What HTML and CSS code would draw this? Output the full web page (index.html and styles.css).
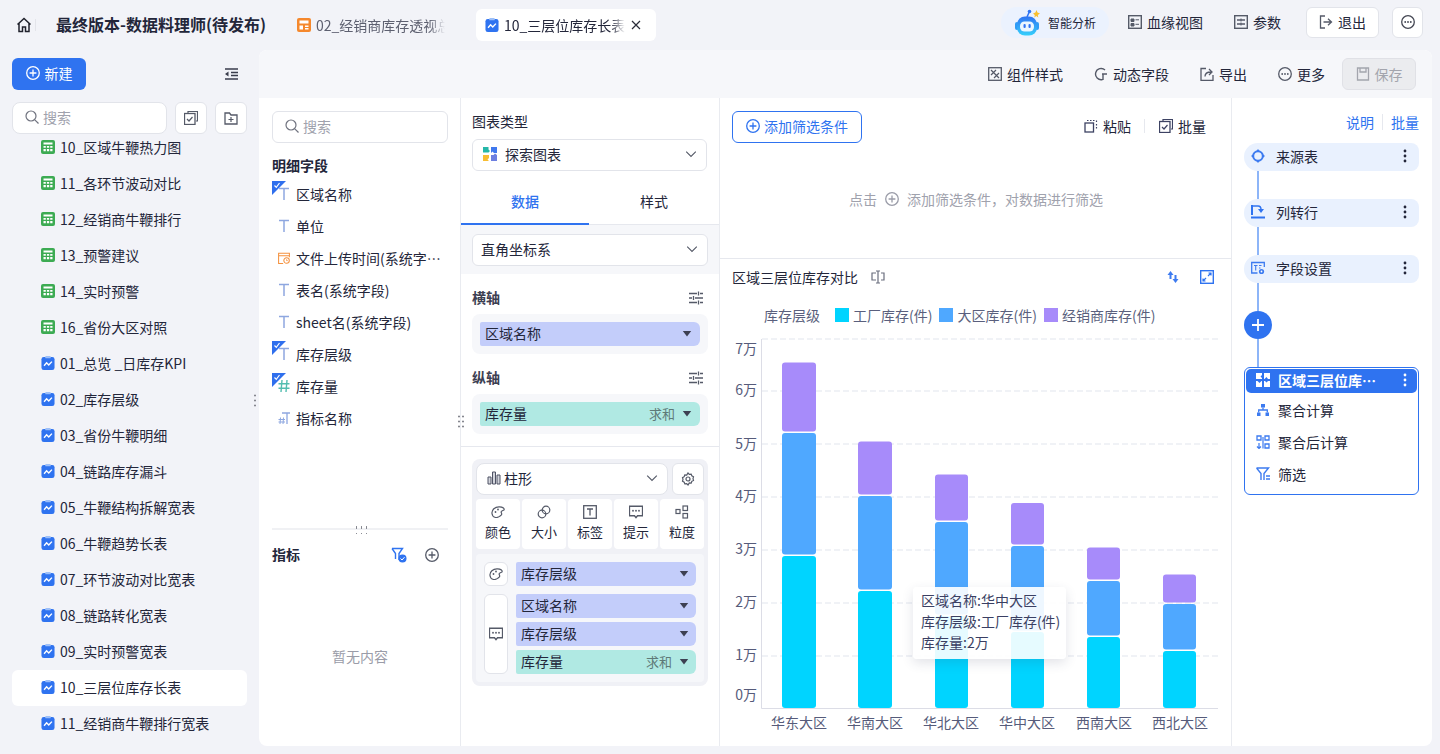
FILE: index.html
```html
<!DOCTYPE html>
<html lang="zh-CN">
<head>
    <meta charset="UTF-8">
    <meta name="viewport" content="width=device-width, initial-scale=1.0">
    <title>最终版本-数据料理师(待发布)</title>
    <link rel="stylesheet" href="styles.css">
</head>
<body>
    <!-- shared icons -->
    <svg class="sprite" aria-hidden="true">
        <symbol id="i-search" viewBox="1 1 14 14"><circle cx="7" cy="7" r="5" fill="none" stroke="currentColor" stroke-width="1.2"/><path d="M10.8 10.8 14.5 14.5" stroke="currentColor" stroke-width="1.2" fill="none"/></symbol>
        <symbol id="i-plus" viewBox="1 1 14 14"><circle cx="8" cy="8" r="6.3" fill="none" stroke="currentColor" stroke-width="1.3"/><path d="M8 4.6v6.8M4.6 8h6.8" stroke="currentColor" stroke-width="1.3" fill="none"/></symbol>
        <symbol id="i-dots" viewBox="1 1 14 14"><circle cx="8" cy="8" r="6.3" fill="none" stroke="currentColor" stroke-width="1.3"/><circle cx="5.2" cy="8" r=".9" fill="currentColor"/><circle cx="8" cy="8" r=".9" fill="currentColor"/><circle cx="10.8" cy="8" r=".9" fill="currentColor"/></symbol>
        <symbol id="i-chev" viewBox="0 0 16 16"><path d="M2.5 5.2 8 10.8l5.5-5.6" fill="none" stroke="currentColor" stroke-width="1.3"/></symbol>
        <symbol id="i-tune" viewBox="1 1 14 14"><path d="M1 3.5h8M12 3.5h3M1 8h3M7 8h8M1 12.5h8M12 12.5h3M10.5 1.5v4M5.5 6v4M10.5 10.5v4" fill="none" stroke="currentColor" stroke-width="1.3"/></symbol>
        <symbol id="i-sheet" viewBox="0 0 14 14"><rect width="14" height="14" rx="2" fill="#3dab53"/><path d="M2.5 2.5h9v2h-9zM2.5 6h2.3v1.8H2.5zM5.9 6h2.3v1.8H5.9zM9.2 6h2.3v1.8H9.2zM2.5 9h2.3v2.2H2.5zM5.9 9h2.3v2.2H5.9zM9.2 9h2.3v2.2H9.2z" fill="#fff"/></symbol>
        <symbol id="i-board" viewBox="0 0 14 15"><rect y="1" width="14" height="14" rx="2.5" fill="#2f73f0"/><rect x="4" width="6" height="2.5" rx="1" fill="#9dbff8"/><path d="M2.8 10.5 5.5 7.3 7.8 9.7 11.2 6" fill="none" stroke="#fff" stroke-width="1.5"/></symbol>
        <symbol id="i-t" viewBox="0 0 12 14"><path d="M1 1.500h10M6 1.500V13" fill="none" stroke="currentColor" stroke-width="1.5"/></symbol>
        <symbol id="i-corner" viewBox="0 0 14 14"><path d="M0 0h14L0 14z" fill="#2f6fed"/><path d="M2.5 4.5 4.3 6.3 7.5 2" fill="none" stroke="#fff" stroke-width="1.2"/></symbol>
        <symbol id="i-caret" viewBox="0 0 10 6"><path d="M.8 0h8.4L5 5.6z" fill="currentColor"/></symbol>
        <symbol id="i-kebab" viewBox="0 0 4 14"><circle cx="2" cy="2" r="1.4" fill="currentColor"/><circle cx="2" cy="7" r="1.4" fill="currentColor"/><circle cx="2" cy="12" r="1.4" fill="currentColor"/></symbol>
        <symbol id="i-palette" viewBox="1 2 14 12"><path d="M2 9.5C1.500 6 5 2.500 9.500 2.800c2.500.2 4.700 1.400 4.700 2.600 0 1.100-2.600 1-3 2.200-.4 1.300 1.200 1.900.2 3.300C10 12.700 7 14 4.800 13.300 3.200 12.800 2.200 11.200 2 9.500z" fill="none" stroke="currentColor" stroke-width="1.2"/><circle cx="5.5" cy="8" r=".9" fill="currentColor"/><circle cx="8" cy="5.5" r=".9" fill="currentColor"/></symbol>
        <symbol id="i-chat" viewBox="1 2 14 12.5"><path d="M1.5 2.5h13v9.500H9.500L8 14l-1.500-2H1.500z" fill="none" stroke="currentColor" stroke-width="1.3"/><circle cx="5" cy="7" r=".9" fill="currentColor"/><circle cx="8" cy="7" r=".9" fill="currentColor"/><circle cx="11" cy="7" r=".9" fill="currentColor"/></symbol>
        <symbol id="i-batch" viewBox="1 1 14 14"><path d="M5 3V1.500h9.500V11H13" fill="none" stroke="currentColor" stroke-width="1.2"/><rect x="1.5" y="3.5" width="10.5" height="11" fill="none" stroke="currentColor" stroke-width="1.3"/><path d="M4 9l2 2 3.500-4" fill="none" stroke="currentColor" stroke-width="1.2"/></symbol>
        <symbol id="i-puzzle" viewBox="0 0 14 14"><path d="M0 0h6v2L4.500 3.500 6 5v1H0zM8 0h6v6H12L10.500 4 8.500 6H8zM0 8h1.500L3.500 10l2-2H6v6H0zM8 8h1l1.500 1.500L12 8h2v6H8z" fill="currentColor"/></symbol>
    </svg>

    <header class="topbar">
        <div class="crumb">
            <svg class="home-icon" viewBox="0 0 16 16"><path d="M1.500 7.500 8 1.500l6.500 6M3 6.500V14.500h3.500V10h3v4.500H13V6.500" fill="none" stroke="#20222c" stroke-width="1.5"/></svg>
            <span class="crumb-sep"></span>
            <span class="crumb-title">最终版本-数据料理师(待发布)</span>
        </div>
        <div class="tab">
            <svg class="ic" viewBox="0 0 14 14"><rect width="14" height="14" rx="2" fill="#f5882d"/><path d="M2.500 2.500h9v3h-9zM2.500 7.500h3.500v4h-3.500zM8 7.500h3.500v1.500H8zM8 10h3.500v1.500H8z" fill="#fff"/></svg>
            <span class="tab-name tab-name-muted">02_经销商库存透视总览</span>
        </div>
        <div class="tab tab-active">
            <svg class="ic"><use href="#i-board"/></svg>
            <span class="tab-name">10_三层位库存长表</span>
            <svg class="tab-close" viewBox="0 0 10 10"><path d="M1 1l8 8M9 1 1 9" stroke="#2a2c38" stroke-width="1.2" fill="none"/></svg>
        </div>
        <div class="top-actions">
            <div class="ai-pill">
                <svg class="robot" viewBox="0 0 28 28">
                    <defs><linearGradient id="robotFill" x1="0" y1="0" x2="0" y2="1"><stop offset="0" stop-color="#2f74f3"/><stop offset="1" stop-color="#35d0fb"/></linearGradient></defs>
                    <path d="M13 8 15 3.500" stroke="#2f74f3" stroke-width="1.5"/><circle cx="15.5" cy="2.5" r="1.8" fill="#2f74f3"/>
                    <path d="M22.500 1l1 2.500L26 4.500 23.800 6l.5 2.500-2-1.500-2 1.500.5-2.500L19 4.500l2.400-1z" fill="#f8bf2f"/>
                    <rect x="1" y="13" width="4" height="8" rx="2" fill="#2f9cf5"/><rect x="21" y="13" width="4" height="8" rx="2" fill="#2f9cf5"/>
                    <rect x="3" y="7.5" width="20" height="19" rx="8" fill="url(#robotFill)"/>
                    <rect x="6" y="12.5" width="14" height="10" rx="4.5" fill="#eaf6ff"/>
                    <rect x="9.5" y="15" width="2.2" height="4" rx="1.1" fill="#2f74f3"/><rect x="14.5" y="15" width="2.2" height="4" rx="1.1" fill="#2f74f3"/>
                </svg>
                <span class="ai-label">智能分析</span>
            </div>
            <div class="top-link top-link-lineage">
                <svg class="ic" viewBox="0 0 14 14"><rect x=".7" y=".7" width="12.6" height="12.6" fill="none" stroke="#555a68" stroke-width="1.4"/><path d="M3 4h3v2.500H3zM3 8.500h3V11H3zM7.500 4.800H11M7.500 9.300H11" fill="#555a68" stroke="#555a68"/></svg>
                <span>血缘视图</span>
            </div>
            <div class="top-link top-link-param">
                <svg class="ic" viewBox="0 0 14 14"><rect x=".7" y=".7" width="12.6" height="12.6" fill="none" stroke="#555a68" stroke-width="1.4"/><path d="M3 5h8M3 9h8" stroke="#555a68" stroke-width="1.4"/><path d="M7 3.500v3M7 7.500v3" stroke="#555a68"/></svg>
                <span>参数</span>
            </div>
            <button class="btn-white btn-exit">
                <svg class="ic" viewBox="0 0 14 14"><path d="M6 1H1.500v12H6" fill="none" stroke="#555a68" stroke-width="1.3"/><path d="M4.500 7H12M9 3.800 12.500 7 9 10.200" fill="none" stroke="#555a68" stroke-width="1.3"/></svg>
                退出
            </button>
            <button class="btn-white btn-more"><svg class="ic ic-dark"><use href="#i-dots"/></svg></button>
        </div>
    </header>

    <div class="workspace">
        <aside class="sidebar">
            <div class="side-head">
                <button class="btn-new"><svg class="ic ic-white"><use href="#i-plus"/></svg>新建</button>
                <svg class="collapse-icon" viewBox="0 0 14 12"><path d="M1 1h13M7 4.500h7M7 7.500h7M1 11h13" stroke="#3a3d4c" stroke-width="1.5"/><path d="M4.500 3.500v5L1 6z" fill="#3a3d4c"/></svg>
            </div>
            <div class="side-search">
                <div class="search-box search-side">
                    <svg class="ic ic-gray"><use href="#i-search"/></svg><span>搜索</span>
                </div>
                <button class="square-btn"><svg class="ic ic-mid"><use href="#i-batch"/></svg></button>
                <button class="square-btn"><svg class="ic ic-mid" viewBox="0 0 14 14"><path d="M1 2h4.500L7 4h6v9H1z" fill="none" stroke="currentColor" stroke-width="1.3"/><path d="M7 6v5M4.500 8.500h5" stroke="currentColor" stroke-width="1.2"/></svg></button>
            </div>
            <ul class="side-list">
                <li><svg class="ic"><use href="#i-sheet"/></svg>10_区域牛鞭热力图</li>
                <li><svg class="ic"><use href="#i-sheet"/></svg>11_各环节波动对比</li>
                <li><svg class="ic"><use href="#i-sheet"/></svg>12_经销商牛鞭排行</li>
                <li><svg class="ic"><use href="#i-sheet"/></svg>13_预警建议</li>
                <li><svg class="ic"><use href="#i-sheet"/></svg>14_实时预警</li>
                <li><svg class="ic"><use href="#i-sheet"/></svg>16_省份大区对照</li>
                <li><svg class="ic"><use href="#i-board"/></svg>01_总览 _日库存KPI</li>
                <li><svg class="ic"><use href="#i-board"/></svg>02_库存层级</li>
                <li><svg class="ic"><use href="#i-board"/></svg>03_省份牛鞭明细</li>
                <li><svg class="ic"><use href="#i-board"/></svg>04_链路库存漏斗</li>
                <li><svg class="ic"><use href="#i-board"/></svg>05_牛鞭结构拆解宽表</li>
                <li><svg class="ic"><use href="#i-board"/></svg>06_牛鞭趋势长表</li>
                <li><svg class="ic"><use href="#i-board"/></svg>07_环节波动对比宽表</li>
                <li><svg class="ic"><use href="#i-board"/></svg>08_链路转化宽表</li>
                <li><svg class="ic"><use href="#i-board"/></svg>09_实时预警宽表</li>
                <li class="active"><svg class="ic"><use href="#i-board"/></svg>10_三层位库存长表</li>
                <li><svg class="ic"><use href="#i-board"/></svg>11_经销商牛鞭排行宽表</li>
            </ul>
            <span class="drag-dots drag-side"></span>
        </aside>

        <main class="panel">
            <div class="toolbar">
                <div class="tool tool-style">
                    <svg class="ic ic-mid" viewBox="0 0 14 14"><rect x=".7" y=".7" width="12.6" height="12.6" fill="none" stroke="currentColor" stroke-width="1.3"/><path d="M3 3l8 8M8 3 3 8M11 6l-5 5" fill="none" stroke="currentColor" stroke-width="1.2"/></svg>
                    组件样式
                </div>
                <div class="tool tool-dynamic">
                    <svg class="ic ic-mid" viewBox="0 0 14 14"><path d="M11 3a5.600 5.600 0 1 0-2.500 9.500M8 7h5M9 7v6" fill="none" stroke="currentColor" stroke-width="1.4"/></svg>
                    动态字段
                </div>
                <div class="tool tool-export">
                    <svg class="ic ic-mid" viewBox="0 0 14 14"><path d="M6 1.500H1v11.800h12V8" fill="none" stroke="currentColor" stroke-width="1.3"/><path d="M5 9.500c0-3 2-4.500 6-4.500M9 2l3 3-3 3" fill="none" stroke="currentColor" stroke-width="1.3"/></svg>
                    导出
                </div>
                <div class="tool tool-more"><svg class="ic ic-mid"><use href="#i-dots"/></svg>更多</div>
                <button class="btn-save">
                    <svg class="ic" viewBox="0 0 14 14"><path d="M1.500 1h11v12h-11z" fill="none" stroke="#a3a5ad" stroke-width="1.3"/><path d="M4 1v4h6V1" fill="none" stroke="#a3a5ad" stroke-width="1.3"/></svg>
                    保存
                </button>
            </div>

            <div class="panel-body">
                <section class="fields">
                    <div class="search-box search-fields">
                        <svg class="ic ic-gray"><use href="#i-search"/></svg><span>搜索</span>
                    </div>
                    <h4 class="fields-title">明细字段</h4>
                    <div class="field-list">
                        <div class="field"><svg class="corner"><use href="#i-corner"/></svg><svg class="field-ic"><use href="#i-t"/></svg><span>区域名称</span></div>
                        <div class="field"><svg class="field-ic"><use href="#i-t"/></svg><span>单位</span></div>
                        <div class="field">
                            <svg class="field-ic field-ic-date" viewBox="0 0 14 14"><path d="M13.300 6V1.500H.7v11.800H6M.7 4.500h12.600" fill="none" stroke="#f5913e" stroke-width="1.2"/><circle cx="10" cy="10" r="3.2" fill="none" stroke="#f5913e" stroke-width="1.2"/><path d="M10 8.500V10h1.300" fill="none" stroke="#f5913e"/></svg>
                            <span>文件上传时间(系统字段)</span>
                        </div>
                        <div class="field"><svg class="field-ic"><use href="#i-t"/></svg><span>表名(系统字段)</span></div>
                        <div class="field"><svg class="field-ic"><use href="#i-t"/></svg><span>sheet名(系统字段)</span></div>
                        <div class="field"><svg class="corner"><use href="#i-corner"/></svg><svg class="field-ic"><use href="#i-t"/></svg><span>库存层级</span></div>
                        <div class="field"><svg class="corner"><use href="#i-corner"/></svg>
                            <svg class="field-ic field-ic-num" viewBox="0 0 12 14"><path d="M4 1 3 13M9 1 8 13M.5 4.800h11M.5 9.200h11" fill="none" stroke="#53bdb0" stroke-width="1.4"/></svg>
                            <span>库存量</span>
                        </div>
                        <div class="field">
                            <svg class="field-ic" viewBox="0 0 12 14"><path d="M4 2h8M9 2v11" fill="none" stroke="#8ea7e0" stroke-width="1.3"/><path d="M2.500 6.500 2 13M5.500 6.500 5 13M.5 8.500h6.500M.5 11h6.500" fill="none" stroke="#8ea7e0"/></svg>
                            <span>指标名称</span>
                        </div>
                    </div>
                    <div class="fields-split"><span class="split-dots"></span></div>
                    <div class="metric-head">
                        <h4>指标</h4>
                        <svg class="metric-filter" viewBox="0 0 16 16"><path d="M1 1.500h10.500L8 6.500V13" fill="none" stroke="#2f73f0" stroke-width="1.4"/><path d="M1 1.500 4.500 6.500V12" fill="none" stroke="#2f73f0" stroke-width="1.4"/><circle cx="11.5" cy="11.5" r="4" fill="#2f73f0"/><path d="M9.500 11.500l1.500 1.500 2.500-2.800" stroke="#fff" fill="none"/></svg>
                        <svg class="ic ic-mid"><use href="#i-plus"/></svg>
                    </div>
                    <p class="metric-empty">暂无内容</p>
                    <span class="drag-dots drag-fields"></span>
                </section>

                <section class="config">
                    <div class="config-label">图表类型</div>
                    <div class="select select-type">
                        <svg class="ic puzzle" viewBox="0 0 14 14"><path d="M0 0h5.500v2.500L7 4 5.500 5.500H0z" fill="#25b7a8"/><path d="M8 0h6v6H11L9.500 4.500 8 6z" fill="#3f78ee"/><path d="M0 8h6V11l-1.500 1.500L6 14H0z" fill="#f8bd32"/><path d="M8 8h2.500L12 6.500 14 8v6H8z" fill="#6d7fe0"/></svg>
                        <span>探索图表</span>
                        <svg class="chev"><use href="#i-chev"/></svg>
                    </div>
                    <div class="config-tabs">
                        <div class="config-tab config-tab-on">数据</div>
                        <div class="config-tab">样式</div>
                    </div>
                    <div class="coord-band">
                        <div class="select"><span>直角坐标系</span><svg class="chev"><use href="#i-chev"/></svg></div>
                    </div>

                    <div class="axis-head"><b>横轴</b><svg class="ic ic-mid"><use href="#i-tune"/></svg></div>
                    <div class="axis-zone">
                        <div class="pill pill-dim">区域名称<svg class="caret"><use href="#i-caret"/></svg></div>
                    </div>
                    <div class="axis-head"><b>纵轴</b><svg class="ic ic-mid"><use href="#i-tune"/></svg></div>
                    <div class="axis-zone">
                        <div class="pill pill-mea">库存量<em>求和</em><svg class="caret"><use href="#i-caret"/></svg></div>
                    </div>
                    <div class="config-line"></div>

                    <div class="mark-group">
                        <div class="mark-top">
                            <div class="select select-mark">
                                <svg class="ic" viewBox="0 0 14 14"><path d="M1 6h3v7H1zM5.500 1h3v12h-3zM10 4h3v9h-3z" fill="#d3d5dc" stroke="#4f5365"/></svg>
                                <span>柱形</span>
                                <svg class="chev"><use href="#i-chev"/></svg>
                            </div>
                            <button class="gear-btn">
                                <svg class="ic ic-mid" viewBox="0 0 14 14"><path d="M7 1l1.300 1.300 1.900-.2.600 1.800 1.700.9-.5 1.800.5 1.800-1.700.9-.6 1.800-1.900-.2L7 13l-1.300-1.300-1.900.2-.6-1.800-1.700-.9.500-1.800-.5-1.800 1.700-.9.600-1.800 1.900.2z" fill="none" stroke="currentColor" stroke-width="1.2"/><circle cx="7" cy="7" r="2" fill="none" stroke="currentColor" stroke-width="1.2"/></svg>
                            </button>
                        </div>
                        <div class="mark-grid">
                            <div class="mark-cell"><svg class="ic ic-mid"><use href="#i-palette"/></svg>颜色</div>
                            <div class="mark-cell">
                                <svg class="ic ic-mid" viewBox="0 0 14 14"><circle cx="5" cy="9" r="3.8" fill="none" stroke="currentColor" stroke-width="1.2"/><circle cx="9" cy="5" r="3.8" fill="none" stroke="currentColor" stroke-width="1.2"/></svg>大小
                            </div>
                            <div class="mark-cell">
                                <svg class="ic ic-mid" viewBox="0 0 14 14"><rect x=".7" y=".7" width="12.6" height="12.6" fill="none" stroke="currentColor" stroke-width="1.3"/><path d="M4 4h6M7 4v6.500" fill="none" stroke="currentColor" stroke-width="1.3"/></svg>标签
                            </div>
                            <div class="mark-cell"><svg class="ic ic-mid"><use href="#i-chat"/></svg>提示</div>
                            <div class="mark-cell">
                                <svg class="ic ic-mid" viewBox="0 0 14 14"><rect x="1" y="4.5" width="4" height="4" fill="none" stroke="currentColor" stroke-width="1.2"/><rect x="8" y="1" width="4.5" height="4.5" fill="none" stroke="currentColor" stroke-width="1.2"/><rect x="8" y="8.5" width="4.5" height="4.5" fill="none" stroke="currentColor" stroke-width="1.2"/></svg>粒度
                            </div>
                        </div>
                        <div class="mark-slots">
                            <div class="slot-row">
                                <div class="slot-badge"><svg class="ic ic-mid"><use href="#i-palette"/></svg></div>
                                <div class="slot-pills">
                                    <div class="pill pill-dim pill-slot">库存层级<svg class="caret"><use href="#i-caret"/></svg></div>
                                </div>
                            </div>
                            <div class="slot-row">
                                <div class="slot-badge"><svg class="ic ic-mid"><use href="#i-chat"/></svg></div>
                                <div class="slot-pills">
                                    <div class="pill pill-dim pill-slot">区域名称<svg class="caret"><use href="#i-caret"/></svg></div>
                                    <div class="pill pill-dim pill-slot">库存层级<svg class="caret"><use href="#i-caret"/></svg></div>
                                    <div class="pill pill-mea pill-slot">库存量<em>求和</em><svg class="caret"><use href="#i-caret"/></svg></div>
                                </div>
                            </div>
                        </div>
                    </div>
                </section>

                <section class="chart-pane">
                    <div class="filter-area">
                        <div class="filter-top">
                            <button class="btn-filter"><svg class="ic"><use href="#i-plus"/></svg>添加筛选条件</button>
                            <div class="filter-tools">
                                <span class="filter-tool">
                                    <svg class="ic ic-navy" viewBox="0 0 14 14"><rect x="1" y="4" width="8.5" height="9" fill="none" stroke="currentColor" stroke-width="1.3"/><path d="M3 1.500h1.500M6 1.500h1.500M9 1.500h1.500M12.500 1.500V3M12.500 5v1.500M12.500 8v1.500" fill="none" stroke="currentColor" stroke-width="1.2"/></svg>
                                    粘贴
                                </span>
                                <span class="filter-sep"></span>
                                <span class="filter-tool"><svg class="ic ic-navy"><use href="#i-batch"/></svg>批量</span>
                            </div>
                        </div>
                        <div class="filter-hint">
                            <span>点击</span><svg class="ic"><use href="#i-plus"/></svg><span>添加筛选条件，对数据进行筛选</span>
                        </div>
                    </div>

                    <div class="chart-head">
                        <span>区域三层位库存对比</span>
                        <svg class="ic title-ic" viewBox="0 0 14 14"><path d="M5 3H1v7h4M10 3h3v7h-3M5 1h4M7 1v12M5 13h4" fill="none" stroke="#6a6e7e" stroke-width="1.2"/></svg>
                        <span class="chart-actions">
                            <svg class="ic" viewBox="0 0 14 14"><path d="M4.500 1 1.500 5H3.500V9H5.500V5H7.500zM9.500 13l3-4h-2V5h-2v4h-2z" fill="#3d7bf0"/></svg>
                            <svg class="ic" viewBox="0 0 14 14"><rect x=".7" y=".7" width="12.6" height="12.6" fill="none" stroke="#2f73f0" stroke-width="1.4"/><path d="M8 6l3-3M8.500 3H11v2.500M6 8l-3 3M3 8.500V11h2.500" fill="none" stroke="#2f73f0" stroke-width="1.2"/></svg>
                        </span>
                    </div>
                    <div class="legend">
                        <span class="legend-name">库存层级</span>
                        <span class="legend-item"><i class="swatch swatch-cyan"></i>工厂库存(件)</span>
                        <span class="legend-item"><i class="swatch swatch-blue"></i>大区库存(件)</span>
                        <span class="legend-item"><i class="swatch swatch-purple"></i>经销商库存(件)</span>
                    </div>

                    <svg class="plot" viewBox="720 330 511 416">
                        <g class="grid">
                            <path d="M762 339H1218M762 391H1218M762 444H1218M762 497H1218M762 550H1218M762 603H1218M762 656H1218"/>
                        </g>
                        <path class="axis" d="M761.5 339V708.5H1218"/>
                        <g class="y-labels">
                            <text x="757" y="354">7万</text>
                            <text x="757" y="395">6万</text>
                            <text x="757" y="449">5万</text>
                            <text x="757" y="501">4万</text>
                            <text x="757" y="554">3万</text>
                            <text x="757" y="607">2万</text>
                            <text x="757" y="660">1万</text>
                            <text x="757" y="700">0万</text>
                        </g>
                        <g class="bars-cyan">
                            <rect x="782" y="556" width="34" height="152" rx="3"/>
                            <rect x="858" y="591" width="34" height="117" rx="3"/>
                            <rect x="935" y="616" width="33" height="92" rx="3"/>
                            <rect x="1011" y="632" width="33" height="76" rx="3"/>
                            <rect x="1087" y="637" width="33" height="71" rx="3"/>
                            <rect x="1163" y="651" width="33" height="57" rx="3"/>
                        </g>
                        <g class="bars-blue">
                            <rect x="782" y="433" width="34" height="121.5" rx="3"/>
                            <rect x="858" y="496" width="34" height="93.5" rx="3"/>
                            <rect x="935" y="522" width="33" height="92.5" rx="3"/>
                            <rect x="1011" y="546" width="33" height="84.5" rx="3"/>
                            <rect x="1087" y="581" width="33" height="54.5" rx="3"/>
                            <rect x="1163" y="604" width="33" height="45.5" rx="3"/>
                        </g>
                        <g class="bars-purple">
                            <rect x="782" y="362.5" width="34" height="69" rx="3"/>
                            <rect x="858" y="441.5" width="34" height="53" rx="3"/>
                            <rect x="935" y="474.5" width="33" height="46" rx="3"/>
                            <rect x="1011" y="503" width="33" height="41.5" rx="3"/>
                            <rect x="1087" y="547.5" width="33" height="32" rx="3"/>
                            <rect x="1163" y="574.5" width="33" height="28" rx="3"/>
                        </g>
                        <g class="x-labels">
                            <text x="799" y="728">华东大区</text>
                            <text x="875" y="728">华南大区</text>
                            <text x="951" y="728">华北大区</text>
                            <text x="1027" y="728">华中大区</text>
                            <text x="1104" y="728">西南大区</text>
                            <text x="1180" y="728">西北大区</text>
                        </g>
                    </svg>
                    <div class="chart-tip">
                        <div>区域名称:华中大区</div>
                        <div>库存层级:工厂库存(件)</div>
                        <div>库存量:2万</div>
                    </div>
                </section>

                <section class="flow">
                    <div class="flow-links"><a>说明</a><span></span><a>批量</a></div>
                    <div class="flow-node">
                        <svg class="node-ic" viewBox="0 0 14 14"><circle cx="7" cy="7" r="4.8" fill="none" stroke="#3d7bf0" stroke-width="2"/><path d="M7 0l2 2.500H5zM7 14l2-2.500H5zM0 7l2.500-2v4zM14 7l-2.500-2v4z" fill="#3d7bf0"/></svg>
                        <span>来源表</span><svg class="kebab"><use href="#i-kebab"/></svg>
                    </div>
                    <div class="flow-link"></div>
                    <div class="flow-node">
                        <svg class="node-ic" viewBox="0 0 14 14"><path d="M1 0v10" stroke="#2f73f0" stroke-width="2"/><path d="M1 1h6c2 0 3 1.500 3 3.500" fill="none" stroke="#2f73f0" stroke-width="1.5"/><path d="M7 4h6l-3 4z" fill="#2f73f0"/><path d="M0 12.500h14" stroke="#2f73f0" stroke-width="2"/></svg>
                        <span>列转行</span><svg class="kebab"><use href="#i-kebab"/></svg>
                    </div>
                    <div class="flow-link"></div>
                    <div class="flow-node">
                        <svg class="node-ic" viewBox="0 0 14 14"><path d="M6.500 12H.7V1.500h12.600V6" fill="none" stroke="#3d7bf0" stroke-width="1.3"/><path d="M3 4.500h3.500M4.700 4.500V9.500M8 4.500h2.500M8 7h1.500" fill="none" stroke="#3d7bf0" stroke-width="1.1"/><circle cx="10.5" cy="10.5" r="2.6" fill="#3d7bf0"/><circle cx="10.5" cy="10.5" r=".9" fill="#fff"/></svg>
                        <span>字段设置</span><svg class="kebab"><use href="#i-kebab"/></svg>
                    </div>
                    <div class="flow-link"></div>
                    <button class="flow-add"><svg viewBox="0 0 12 12"><path d="M6 0v12M0 6h12" stroke="#fff" stroke-width="1.8"/></svg></button>
                    <div class="flow-link"></div>
                    <div class="flow-group">
                        <div class="group-head">
                            <svg class="ic ic-white"><use href="#i-puzzle"/></svg>
                            <span>区域三层位库存对比</span>
                            <svg class="kebab"><use href="#i-kebab"/></svg>
                        </div>
                        <div class="group-item">
                            <svg class="group-ic" viewBox="0 0 14 14"><path d="M5 1h4v3.500H5zM1 9.500h3.500V13H1zM9.500 9.500H13V13H9.500z" fill="#3d7bf0"/><path d="M7 4.500V7M2.700 9.500V7h8.600v2.500" fill="none" stroke="#3d7bf0" stroke-width="1.3"/></svg>
                            聚合计算
                        </div>
                        <div class="group-item">
                            <svg class="group-ic" viewBox="0 0 14 14"><path d="M1 1h4v4H1zM9 1h4v4H9zM9 9h4v4H9z" fill="none" stroke="#3d7bf0" stroke-width="1.3"/><path d="M3 8v5.500M1 11.500l2 2 2-2M7 13.500V2" fill="none" stroke="#3d7bf0" stroke-width="1.2"/></svg>
                            聚合后计算
                        </div>
                        <div class="group-item">
                            <svg class="group-ic" viewBox="0 0 14 14"><path d="M.5 1h12L8 6.500V13M.5 1 5 6.500V13" fill="none" stroke="#3d7bf0" stroke-width="1.4"/><path d="M10 9h4M10 12h4" stroke="#3d7bf0" stroke-width="1.3"/></svg>
                            筛选
                        </div>
                    </div>
                </section>
            </div>
        </main>
    </div>
</body>
</html>
```

FILE: styles.css
```css
* {
    box-sizing: border-box;
}
body {
    margin: 0;
    height: 754px;
    overflow: hidden;
    background: #f2f3f8;
    color: #23263a;
    font-family: "Noto Sans CJK SC", "Liberation Sans", sans-serif;
    font-size: 14px;
}
ul, h4, p {
    margin: 0;
    padding: 0;
}
button {
    font-family: inherit;
    font-size: 14px;
    color: inherit;
    cursor: pointer;
}
.sprite {
    position: absolute;
    width: 0;
    height: 0;
}
.ic {
    width: 14px;
    height: 14px;
    flex: none;
}
.ic-white { color: #fff; }
.ic-gray { color: #70737f; }
.ic-mid { color: #555a68; }
.ic-dark { color: #444753; }
.ic-navy { color: #3d4263; }

/* top bar */
.topbar {
    height: 50px;
    display: flex;
    align-items: center;
}
.crumb {
    flex: 0 0 287px;
    display: flex;
    align-items: center;
    padding-left: 16px;
}
.home-icon {
    width: 16px;
    height: 16px;
}
.crumb-sep {
    width: 1px;
    height: 12px;
    margin-left: 3px;
    background: #e3e4ea;
}
.crumb-title {
    margin-left: 20px;
    padding-bottom: 2px;
    font-size: 16px;
    font-weight: 700;
    white-space: nowrap;
}
.tab {
    width: 180px;
    height: 32px;
    margin-right: 9px;
    padding-left: 10px;
    display: flex;
    align-items: center;
    gap: 5px;
    border-radius: 6px;
}
.tab-active {
    background: #fff;
    padding-left: 9px;
}
.tab-name {
    width: 121px;
    overflow: hidden;
    white-space: nowrap;
    -webkit-mask-image: linear-gradient(90deg, #000 88%, transparent);
    mask-image: linear-gradient(90deg, #000 88%, transparent);
}
.tab-name-muted {
    width: 129px;
    color: #5d6070;
}
.tab-close {
    width: 10px;
    height: 10px;
    margin-left: 1px;
}
.top-actions {
    margin-left: auto;
    align-self: flex-start;
    padding: 7px 17px 0 0;
    display: flex;
    align-items: center;
}
.ai-pill {
    width: 108px;
    height: 31px;
    padding-left: 13px;
    display: flex;
    align-items: center;
    gap: 6px;
    border-radius: 16px;
    background: #ebf2fe;
}
.robot {
    width: 28px;
    height: 28px;
    flex: none;
}
.ai-label {
    font-size: 12px;
    padding-bottom: 1px;
}
.top-link {
    display: flex;
    align-items: center;
    gap: 5px;
    padding-bottom: 1px;
}
.top-link-lineage { margin-left: 19px; }
.top-link-param { margin-left: 31px; }
.btn-white {
    height: 31px;
    display: flex;
    align-items: center;
    justify-content: center;
    gap: 5px;
    background: #fff;
    border: 1px solid #e2e4ea;
    border-radius: 6px;
    padding: 0 0 1px;
}
.btn-exit {
    width: 73px;
    margin-left: 25px;
}
.btn-more {
    width: 31px;
    margin-left: 13px;
}

.workspace {
    display: flex;
    height: 696px;
}

/* left list */
.sidebar {
    position: relative;
    flex: 0 0 259px;
    padding-top: 8px;
}
.side-head {
    height: 32px;
    display: flex;
    align-items: center;
    padding: 0 21px 0 12px;
    justify-content: space-between;
}
.btn-new {
    width: 74px;
    height: 32px;
    display: flex;
    align-items: center;
    justify-content: center;
    gap: 5px;
    color: #fff;
    background: #2f73f0;
    border: 0;
    border-radius: 6px;
    padding: 0 0 2px;
}
.collapse-icon {
    width: 14px;
    height: 12px;
}
.side-search {
    margin-top: 12px;
    padding: 0 12px;
    display: flex;
    gap: 8px;
}
.search-box {
    display: flex;
    align-items: center;
    gap: 4px;
    background: #fff;
    border: 1px solid #e2e4ea;
    border-radius: 6px;
    color: #a0a2ad;
    font-size: 14px;
    padding: 0 0 2px 12px;
}
.search-side {
    width: 155px;
    height: 32px;
    border-radius: 8px;
}
.square-btn {
    width: 32px;
    height: 32px;
    display: flex;
    align-items: center;
    justify-content: center;
    background: #fff;
    border: 1px solid #e2e4ea;
    border-radius: 6px;
    padding: 0;
}
.side-list {
    list-style: none;
    margin-top: -8px;
    padding: 4px 12px 0;
    height: 630px;
    overflow: hidden;
}
.side-list li {
    height: 36px;
    display: flex;
    align-items: center;
    gap: 5px;
    padding: 0 0 2px 29px;
    border-radius: 6px;
    white-space: nowrap;
}
.side-list li.active {
    background: #fff;
}
.drag-dots {
    position: absolute;
    width: 5px;
    height: 14px;
    background-image: radial-gradient(#85878f 0.8px, transparent 1px);
    background-size: 4px 5px;
}
.drag-side {
    right: 1px;
    top: 343px;
}

/* main panel */
.panel {
    width: 1173px;
    height: 696px;
    background: #fff;
    border-radius: 8px;
    overflow: hidden;
}
.toolbar {
    height: 48px;
    display: flex;
    align-items: center;
    background: #f6f7fa;
    padding-right: 16px;
}
.tool {
    display: flex;
    align-items: center;
    gap: 5px;
    white-space: nowrap;
}
.tool-style { margin-left: 729px; }
.tool-dynamic { margin-left: 31px; }
.tool-export { margin-left: 31px; }
.tool-more { margin-left: 31px; }
.btn-save {
    width: 74px;
    height: 32px;
    margin-left: 17px;
    display: flex;
    align-items: center;
    justify-content: center;
    gap: 5px;
    color: #a3a5ad;
    background: #ebecef;
    border: 1px solid #e0e1e6;
    border-radius: 6px;
    padding: 0;
}
.panel-body {
    display: flex;
    height: 648px;
}

/* fields column */
.fields {
    position: relative;
    flex: 0 0 202px;
    padding: 13px 12px 0 13px;
    border-right: 1px solid #e9ebf0;
}
.search-fields {
    height: 32px;
}
.fields-title {
    margin-top: 12px;
    line-height: 20px;
    font-size: 14px;
    font-weight: 700;
}
.field-list {
    height: 349px;
    margin-top: 4px;
}
.field {
    position: relative;
    height: 32px;
    display: flex;
    align-items: center;
    padding: 0 0 2px 6px;
    gap: 6px;
}
.field span {
    overflow: hidden;
    white-space: nowrap;
    text-overflow: ellipsis;
    width: 148px;
}
.field-ic {
    width: 12px;
    height: 14px;
    flex: none;
    color: #8ea7e0;
}
.corner {
    position: absolute;
    left: 0;
    top: 2px;
    width: 14px;
    height: 14px;
}
.fields-split {
    position: relative;
    height: 2px;
    background: #f0f1f4;
}
.split-dots {
    position: absolute;
    left: 82px;
    top: -4px;
    width: 14px;
    height: 10px;
    background-image: radial-gradient(#85878f 0.7px, transparent 1px);
    background-size: 5px 7px;
}
.metric-head {
    margin-top: 15px;
    height: 20px;
    display: flex;
    align-items: center;
}
.metric-head h4 {
    padding-bottom: 2px;
    font-size: 14px;
    flex: 1;
}
.metric-filter {
    width: 16px;
    height: 16px;
    margin-right: 18px;
}
.metric-head .ic {
    margin-right: 9px;
}
.metric-empty {
    margin-top: 81px;
    line-height: 20px;
    text-align: center;
    color: #9a9ca8;
}
.drag-fields {
    right: -5px;
    top: 316px;
    width: 8px;
}

/* config column */
.config {
    flex: 0 0 259px;
    padding-top: 13px;
    border-right: 1px solid #e9ebf0;
}
.config-label {
    margin-left: 11px;
    line-height: 20px;
}
.select {
    height: 32px;
    display: flex;
    align-items: center;
    padding: 0 8px 2px;
    background: #fff;
    border: 1px solid #e2e4ea;
    border-radius: 6px;
}
.select-type {
    width: 235px;
    margin: 8px 0 0 11px;
    padding-left: 10px;
    gap: 8px;
}
.chev {
    width: 14px;
    height: 14px;
    margin-left: auto;
    color: #555a68;
}
.config-tabs {
    margin-top: 9px;
    display: grid;
    grid-template-columns: 128px 130px;
    height: 45px;
    border-bottom: 1px solid #e6e8ee;
}
.config-tab {
    display: flex;
    align-items: center;
    justify-content: center;
    padding-bottom: 3px;
}
.config-tab-on {
    color: #2f73f0;
    font-weight: 500;
    border-bottom: 2px solid #2f73f0;
    padding-bottom: 1px;
    height: 45px;
}
.coord-band {
    height: 49px;
    padding: 9px 11px;
    background: #f6f7fa;
}
.axis-head {
    margin: 14px 11px 0;
    padding-right: 5px;
    height: 20px;
    display: flex;
    align-items: center;
    justify-content: space-between;
}
.axis-head b {
    color: #3d4052;
    font-size: 14px;
    padding-bottom: 2px;
}
.axis-zone {
    margin: 6px 11px 0;
    height: 40px;
    padding: 8px;
    background: #f6f7fa;
    border-radius: 8px;
}
.pill {
    height: 24px;
    display: flex;
    align-items: center;
    padding: 0 0 2px 5px;
    border-radius: 2px 6px 6px 2px;
}
.pill-dim { background: #c3cdfa; }
.pill-mea { background: #b0e9e3; }
.pill em {
    margin-left: auto;
    font-style: normal;
    font-size: 13px;
    color: #5e7a78;
}
.caret {
    width: 10px;
    height: 6px;
    margin: 2px 8px 0 auto;
    color: #3d4052;
}
.pill em + .caret {
    margin-left: 7px;
}
.config-line {
    margin-top: 12px;
    height: 1px;
    background: #e6e8ee;
}
.mark-group {
    margin: 12px 11px 0;
    height: 227px;
    padding: 4px;
    background: #f0f1f6;
    border-radius: 8px;
}
.mark-top {
    display: flex;
    gap: 4px;
}
.select-mark {
    flex: 1;
    gap: 3px;
    padding-left: 10px;
    border-radius: 8px;
}
.gear-btn {
    width: 32px;
    height: 32px;
    display: flex;
    align-items: center;
    justify-content: center;
    background: #fff;
    border: 1px solid #e2e4ea;
    border-radius: 6px;
    padding: 0;
}
.mark-grid {
    margin-top: 4px;
    display: grid;
    grid-template-columns: repeat(5, 44px);
    gap: 2px;
}
.mark-cell {
    height: 50px;
    padding-bottom: 1px;
    display: flex;
    flex-direction: column;
    align-items: center;
    justify-content: center;
    gap: 3px;
    font-size: 13px;
    line-height: 20px;
    background: #fff;
    border-radius: 4px;
}
.mark-slots {
    margin-top: 5px;
    height: 128px;
    padding: 8px;
    background: #f6f7fa;
    border-radius: 4px;
}
.slot-row {
    display: flex;
    gap: 8px;
    margin-bottom: 8px;
}
.slot-badge {
    flex: 0 0 24px;
    display: flex;
    align-items: center;
    justify-content: center;
    background: #fff;
    border: 1px solid #e2e4ea;
    border-radius: 6px;
}
.slot-pills {
    flex: 1;
    display: flex;
    flex-direction: column;
    gap: 4px;
}
.pill-slot .caret {
    margin-right: 7px;
}

/* chart column */
.chart-pane {
    position: relative;
    flex: 0 0 512px;
    border-right: 1px solid #e9ebf0;
}
.filter-area {
    height: 161px;
    border-bottom: 1px solid #e6e8ee;
    padding: 13px 12px 0;
}
.filter-top {
    display: flex;
    align-items: center;
    justify-content: space-between;
}
.btn-filter {
    width: 130px;
    height: 32px;
    display: flex;
    align-items: center;
    justify-content: center;
    gap: 4px;
    color: #2f73f0;
    background: #fff;
    border: 1px solid #2f73f0;
    border-radius: 6px;
    padding: 0 0 2px;
}
.filter-tools {
    display: flex;
    align-items: center;
    padding: 0 13px 2px 0;
}
.filter-tool {
    display: flex;
    align-items: center;
    gap: 5px;
}
.filter-sep {
    width: 1px;
    height: 14px;
    margin: 0 14px 0 13px;
    background: #e6e8ee;
}
.filter-hint {
    margin: 46px 0 0 117px;
    display: flex;
    align-items: center;
    gap: 8px;
    color: #a0a2ad;
    font-size: 14px;
}
.filter-hint .ic {
    color: #9a9ca8;
}
.chart-head {
    margin-top: 9px;
    padding: 0 17px 2px 12px;
    height: 20px;
    display: flex;
    align-items: center;
}
.title-ic {
    margin-left: 13px;
}
.chart-actions {
    margin-left: auto;
    display: flex;
    gap: 20px;
}
.legend {
    margin: 18px 0 0 44px;
    padding-bottom: 2px;
    height: 20px;
    display: flex;
    align-items: center;
    color: #5a5f7d;
    white-space: nowrap;
}
.legend-name {
    margin-right: 15px;
}
.legend-item {
    display: flex;
    align-items: center;
    gap: 4px;
    margin-right: 7px;
}
.swatch {
    width: 14px;
    height: 14px;
}
.swatch-cyan { background: #00d4ff; }
.swatch-blue { background: #4fa8ff; }
.swatch-purple { background: #a78bfa; }
.plot {
    display: block;
    width: 511px;
    height: 416px;
    margin-top: 4px;
}
.grid path {
    stroke: #eceef3;
    stroke-width: 1.5;
    stroke-dasharray: 6 3;
    fill: none;
}
.axis {
    stroke: #dcdde6;
    fill: none;
}
.y-labels text {
    font-size: 14px;
    fill: #565b7a;
    text-anchor: end;
}
.x-labels text {
    font-size: 14px;
    fill: #565b7a;
    text-anchor: middle;
}
.bars-cyan rect { fill: #00d4ff; }
.bars-blue rect { fill: #4fa8ff; }
.bars-purple rect { fill: #a78bfa; }
.chart-tip {
    position: absolute;
    left: 193px;
    top: 489px;
    width: 153px;
    height: 72px;
    padding: 3px 8px;
    font-size: 14px;
    line-height: 21px;
    white-space: nowrap;
    color: #3a3f63;
    background: rgba(255, 255, 255, 0.9);
    border-radius: 4px;
    box-shadow: 0 4px 12px rgba(50, 55, 90, 0.14);
}

/* flow column */
.flow {
    flex: 1;
    padding: 14px 13px 0 12px;
}
.flow-links {
    height: 20px;
    display: flex;
    align-items: center;
    justify-content: flex-end;
    color: #2f73f0;
}
.flow-links span {
    width: 1px;
    height: 16px;
    margin: 0 8px;
    background: #e6e8ee;
}
.flow-node {
    height: 28px;
    margin-top: 11px;
    display: flex;
    align-items: center;
    padding: 0 12px 2px 7px;
    background: #e9f1fe;
    border-radius: 14px 8px 8px 14px;
}
.flow-link + .flow-node {
    margin-top: 0;
}
.node-ic {
    width: 14px;
    height: 14px;
    margin-right: 11px;
}
.node-ic + span {
    flex: 1;
}
.kebab {
    width: 4px;
    height: 14px;
    color: #23263a;
}
.flow-link {
    width: 2px;
    height: 28px;
    margin-left: 13px;
    background: #8db5f8;
}
.flow-add {
    width: 28px;
    height: 28px;
    display: flex;
    align-items: center;
    justify-content: center;
    background: #2f73f0;
    border: 0;
    border-radius: 50%;
    padding: 0;
}
.flow-add svg {
    width: 12px;
    height: 12px;
}
.flow-group {
    height: 128px;
    padding: 1px;
    border: 1px solid #2f73f0;
    border-radius: 6px;
}
.group-head {
    height: 24px;
    margin-bottom: 1px;
    display: flex;
    align-items: center;
    padding: 0 10px 2px;
    color: #fff;
    font-weight: 700;
    background: #2f73f0;
    border-radius: 5px;
}
.group-head span {
    width: 100px;
    margin-left: 8px;
    overflow: hidden;
    white-space: nowrap;
    text-overflow: ellipsis;
}
.group-head .kebab {
    margin-left: auto;
    color: #fff;
}
.group-item {
    height: 32px;
    display: flex;
    align-items: center;
    gap: 8px;
    padding-left: 10px;
}
.group-ic {
    width: 14px;
    height: 14px;
}
```
